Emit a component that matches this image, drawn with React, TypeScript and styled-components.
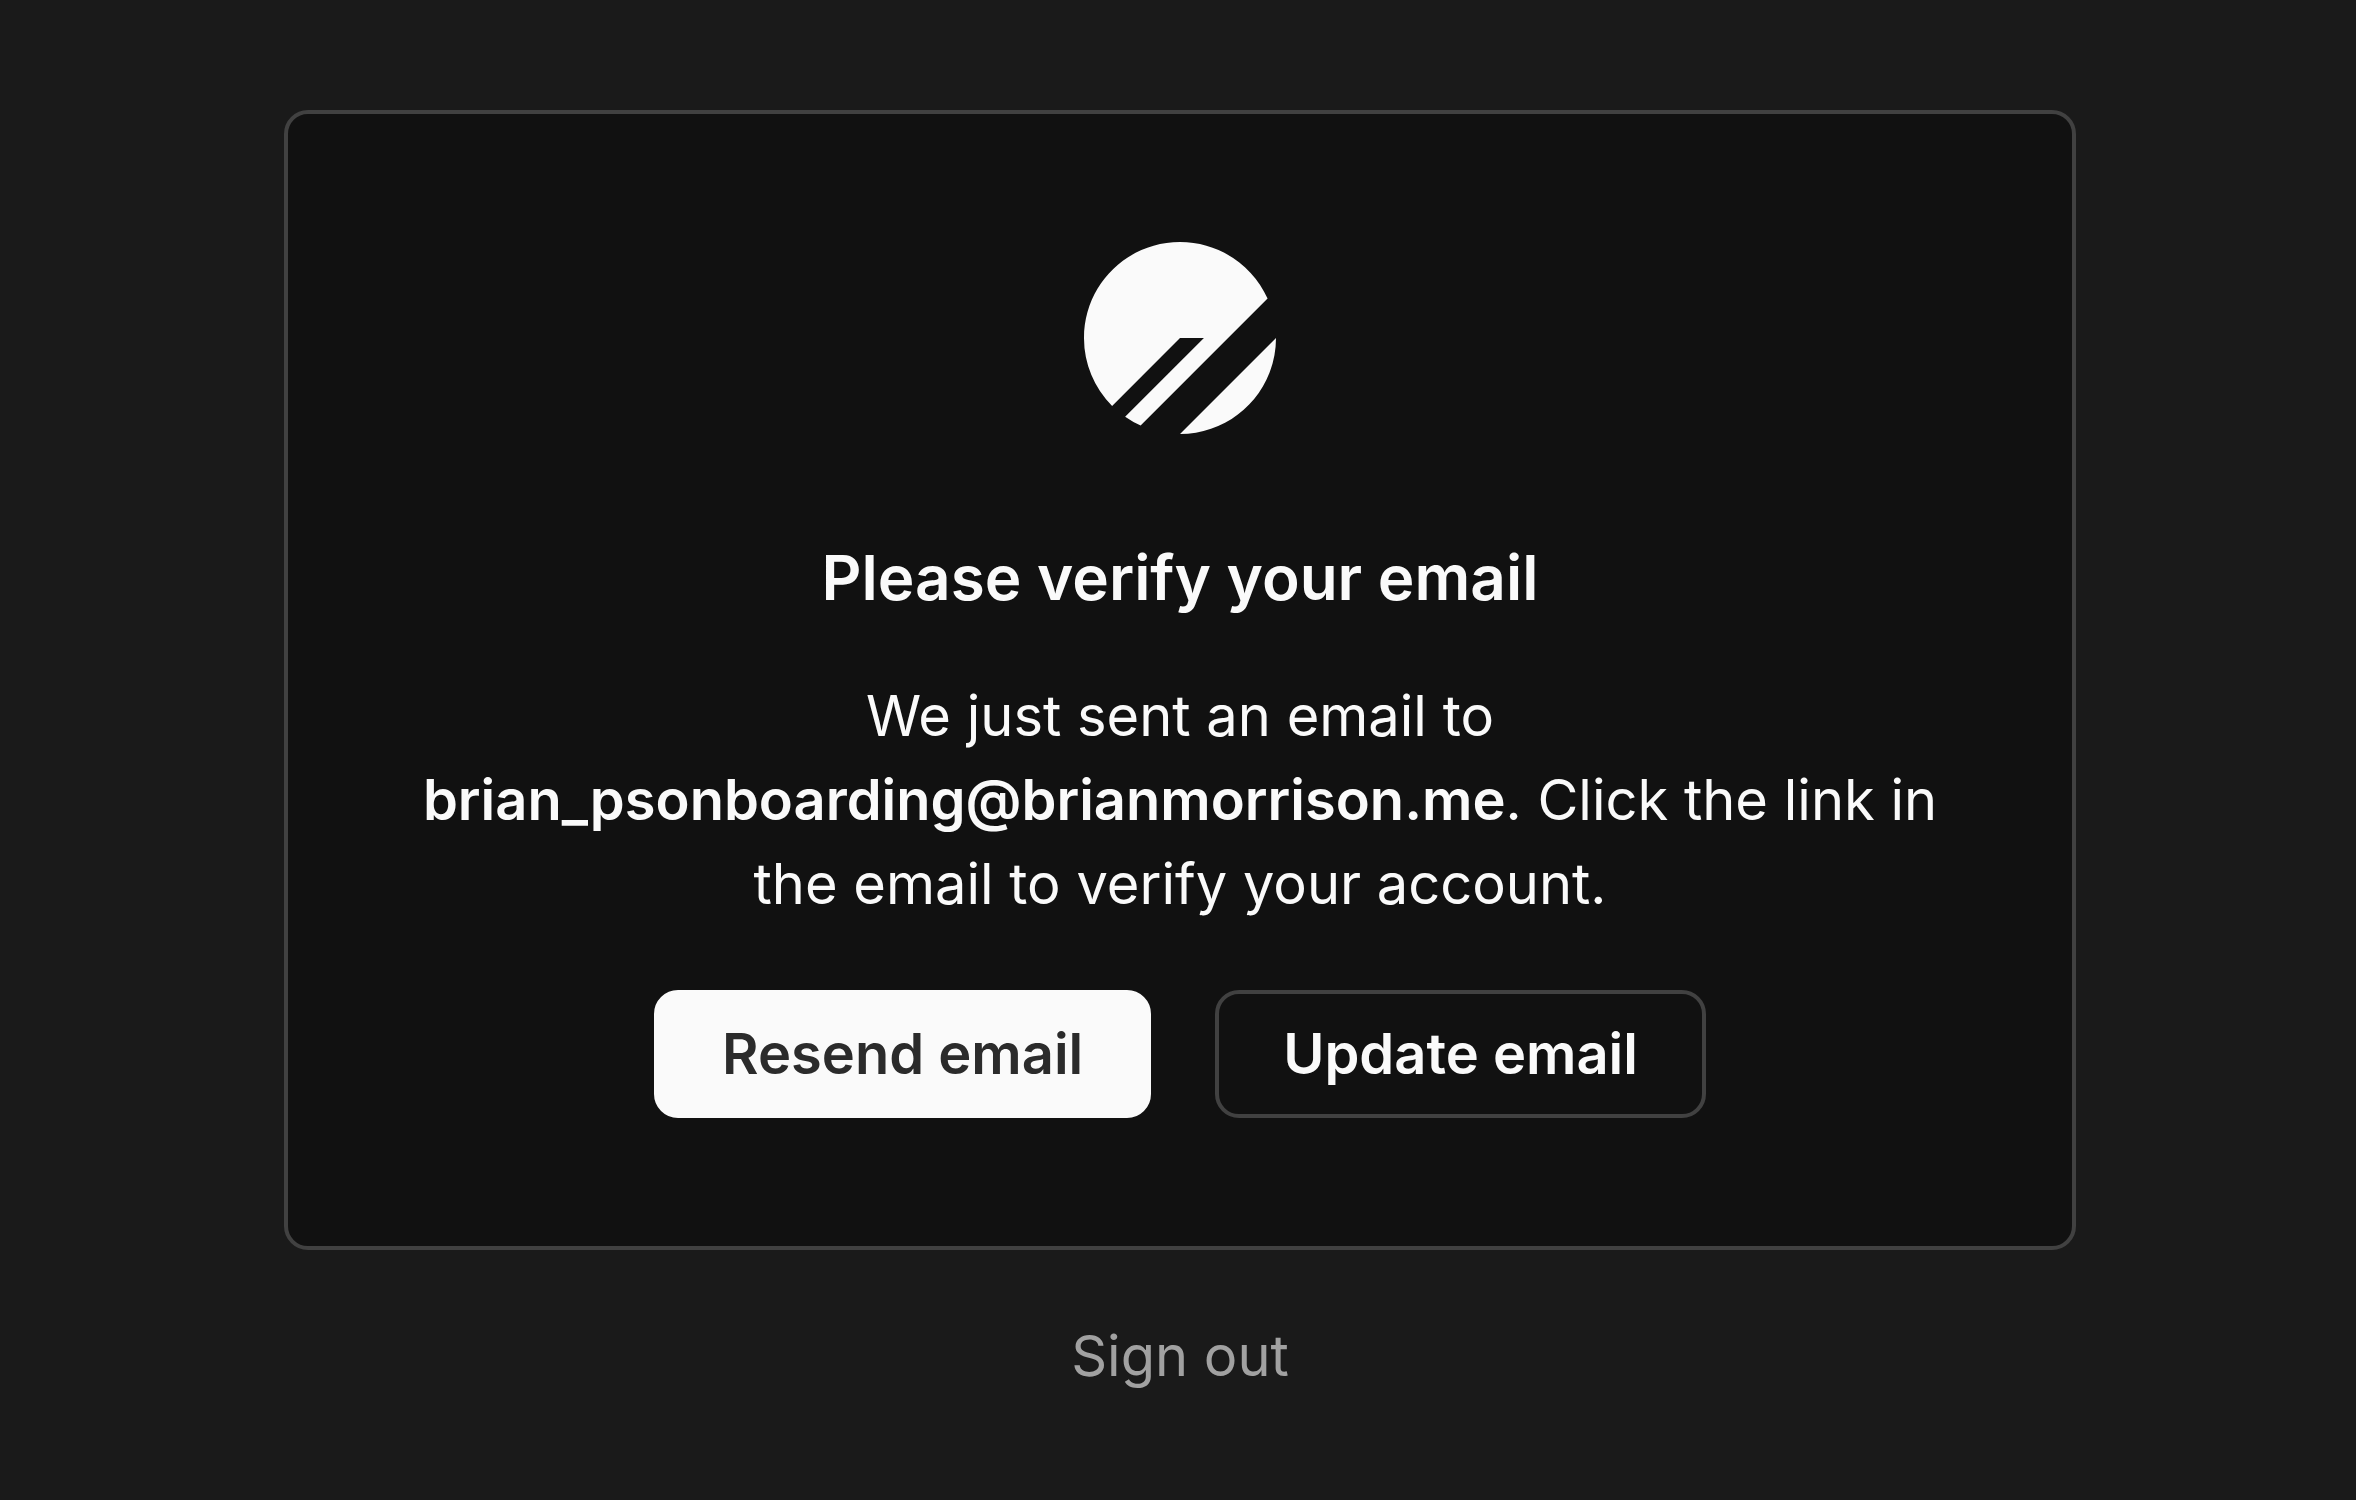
import React from "react";
import styled, { createGlobalStyle } from "styled-components";

const GlobalStyle = createGlobalStyle`
  *, *::before, *::after { box-sizing: border-box; }
  body {
    margin: 0;
    background: #1a1a1a;
    color: #fafafa;
    font-family: Inter, "Liberation Sans", sans-serif;
    font-size: 56px;
    line-height: 84px;
  }
`;

const Page = styled.main`
  min-height: 100vh;
  display: flex;
  flex-direction: column;
  align-items: center;
  gap: 64px;
  padding: 110px 60px 64px 64px;
`;

const Card = styled.section`
  width: 100%;
  max-width: 1792px;
  display: flex;
  flex-direction: column;
  align-items: center;
  padding: 128px;
  border: 4px solid #414141;
  border-radius: 24px;
  background: #111111;
  text-align: center;
`;

const Logo = styled.svg`
  width: 192px;
  height: 192px;
  fill: currentColor;
`;

const Title = styled.h1`
  margin: 96px 0 48px;
  font-size: 62px;
  line-height: 96px;
  font-weight: 600;
`;

const Message = styled.p`
  margin: 0 0 64px;
`;

const Address = styled.strong`
  font-weight: 600;
`;

const Actions = styled.div`
  display: flex;
  flex-wrap: wrap;
  justify-content: center;
  gap: 64px;
`;

const Button = styled.button<{ $primary?: boolean }>`
  height: 128px;
  padding: 0 64px;
  border: 4px solid ${(p) => (p.$primary ? "#fafafa" : "#414141")};
  border-radius: 24px;
  background: ${(p) => (p.$primary ? "#fafafa" : "transparent")};
  color: ${(p) => (p.$primary ? "#2b2b2b" : "#fafafa")};
  font: inherit;
  font-weight: 600;
  cursor: pointer;
`;

const SignOut = styled.a`
  color: #a1a1a1;
  text-decoration: none;
`;

export default function App() {
  return (
    <>
      <GlobalStyle />
      <Page>
        <Card>
          <Logo viewBox="0 0 24 24" role="img" aria-label="PlanetScale">
            <path d="M0 12C0 5.373 5.373 0 12 0c4.873 0 9.067 2.904 10.947 7.077l-15.87 15.87a11.981 11.981 0 0 1-1.935-1.099L14.99 12H12l-8.485 8.485A11.962 11.962 0 0 1 0 12Zm12.004 12L24 12.004C23.998 18.628 18.628 23.998 12.004 24Z" />
          </Logo>
          <Title>Please verify your email</Title>
          <Message>
            We just sent an email to <Address>brian_psonboarding@brianmorrison.me</Address>. Click the
            link in the email to verify your account.
          </Message>
          <Actions>
            <Button type="button" $primary>
              Resend email
            </Button>
            <Button type="button">Update email</Button>
          </Actions>
        </Card>
        <SignOut href="#sign-out">Sign out</SignOut>
      </Page>
    </>
  );
}
